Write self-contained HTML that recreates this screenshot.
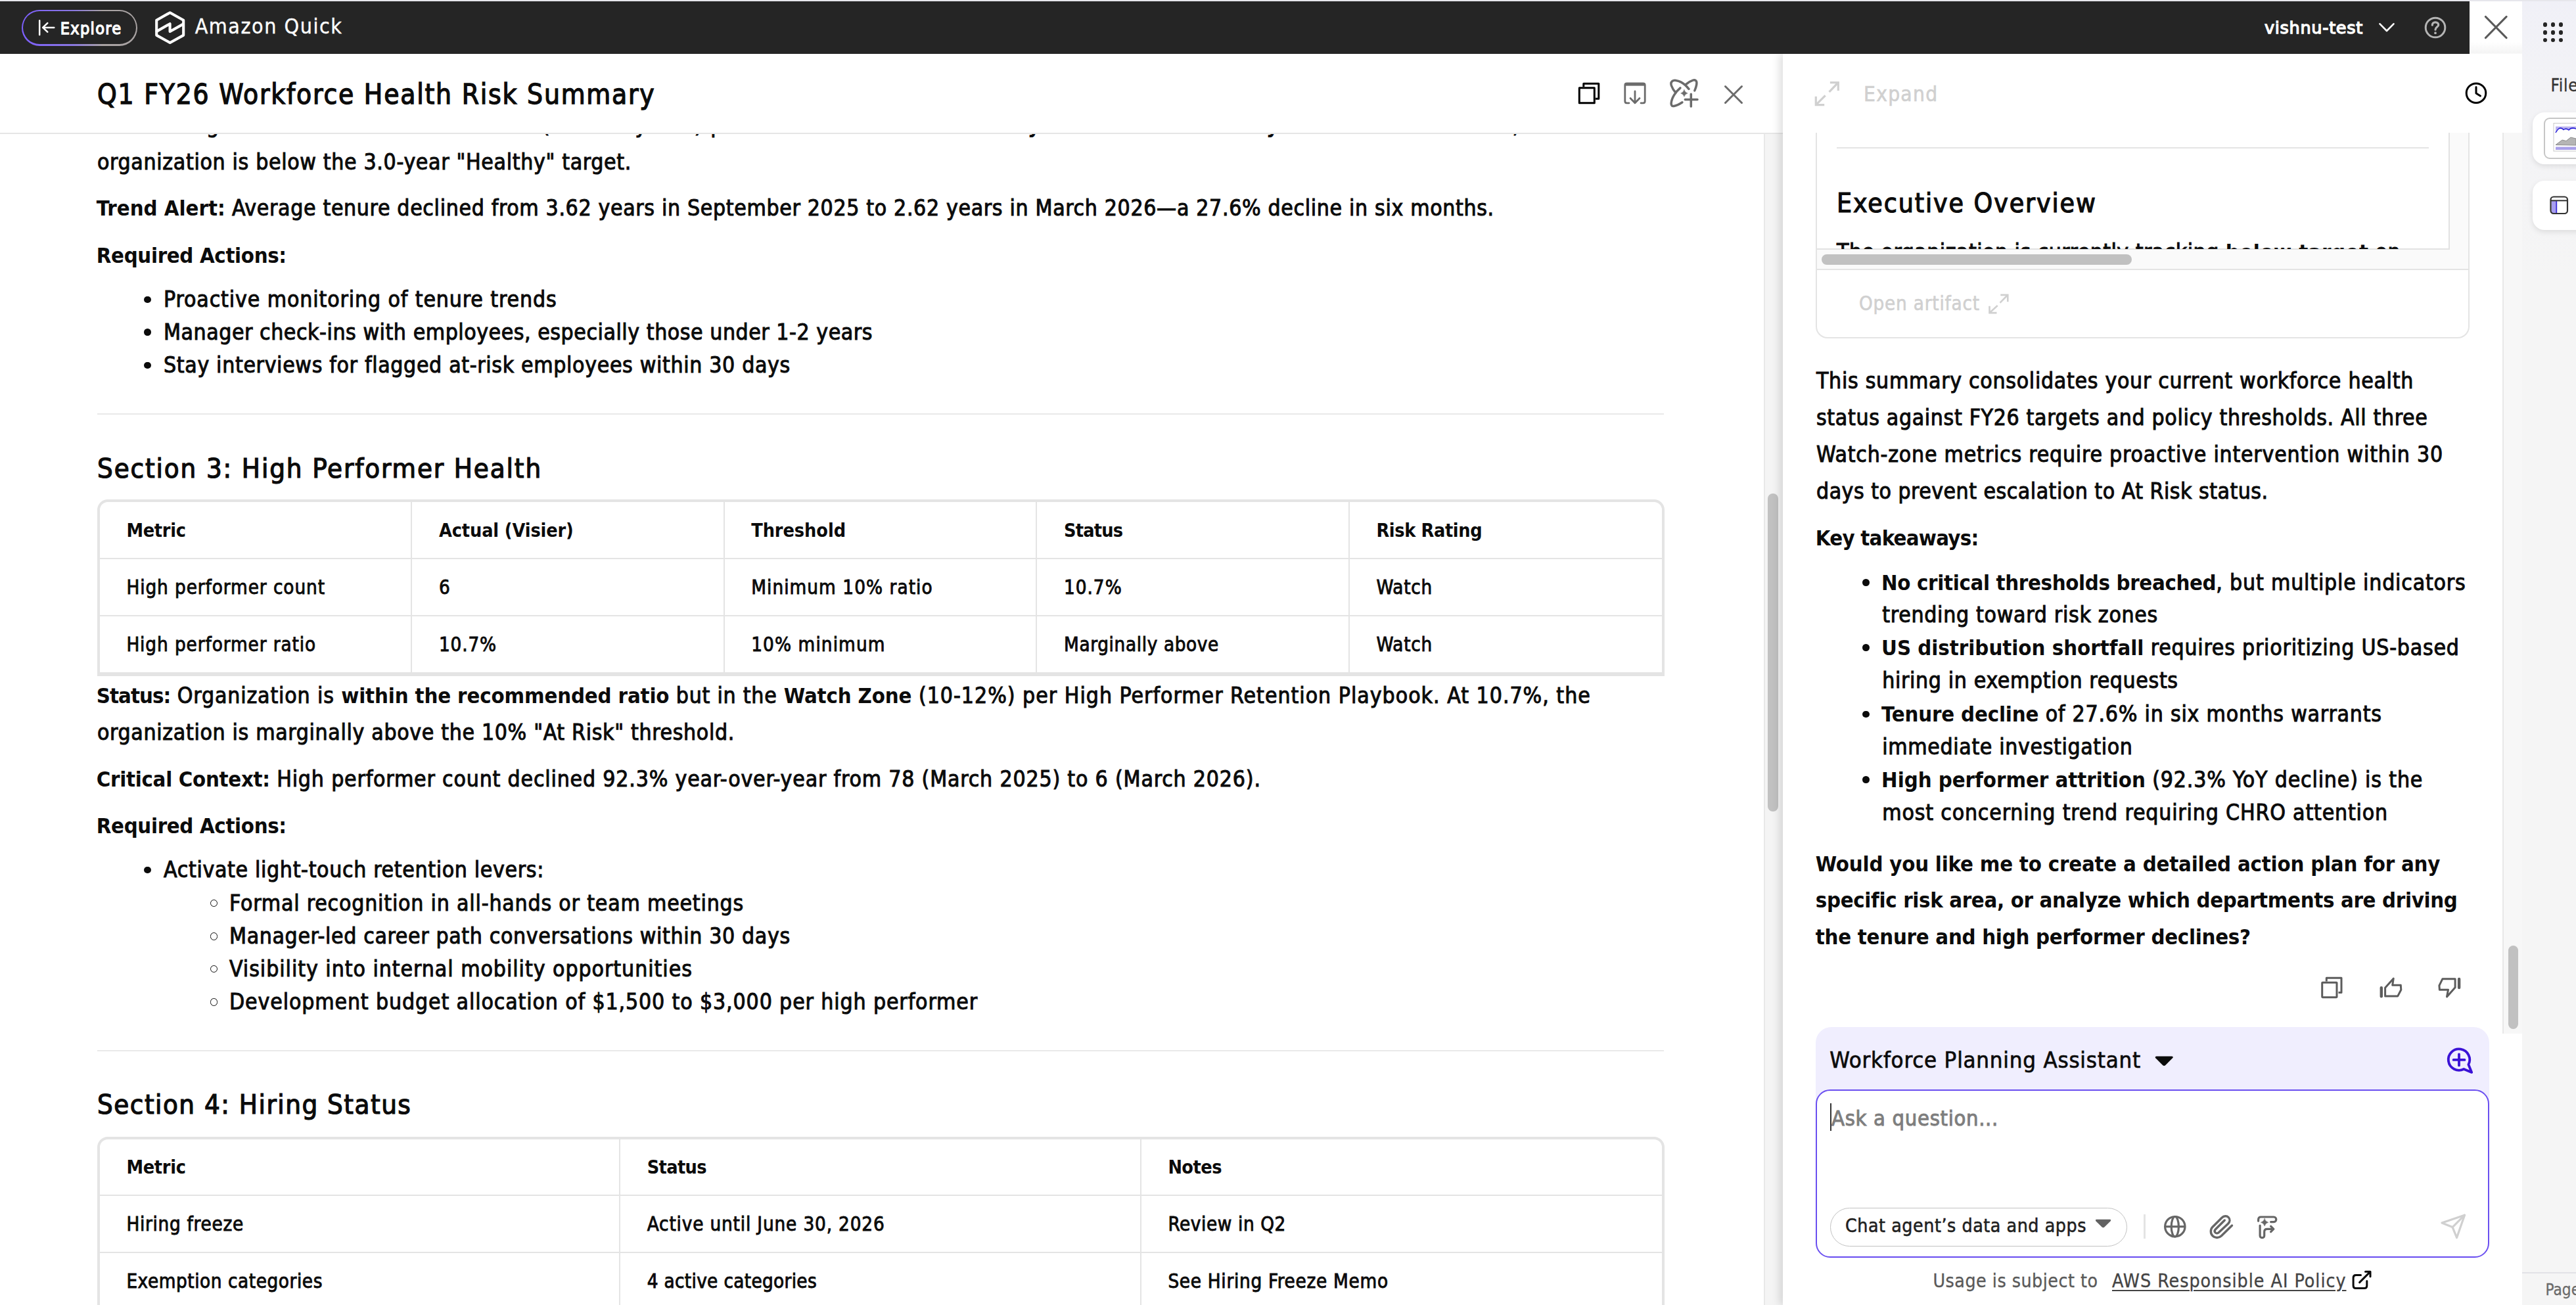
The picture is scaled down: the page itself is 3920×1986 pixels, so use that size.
<!DOCTYPE html>
<html lang="en"><head><meta charset="utf-8"><title>Q1 FY26 Workforce Health Risk Summary - Amazon Quick</title>
<style>
*{box-sizing:border-box;margin:0;padding:0}
html,body{width:3920px;height:1986px;overflow:hidden;background:#fff}
body{position:relative;font-family:"DejaVu Sans Condensed","Liberation Sans",sans-serif;color:#0b0b0b}
.t{position:absolute;white-space:nowrap;line-height:1;font-weight:400;-webkit-text-stroke:0.03em;display:block;text-decoration:none}
.t b{font-weight:700;font-size:0.975em;-webkit-text-stroke:0}
.sb{-webkit-text-stroke:0.05em}
.md{-webkit-text-stroke:0.02em}
.lt{-webkit-text-stroke:0.012em}
.w{font-family:"DejaVu Sans","Liberation Sans",sans-serif}
.abs{position:absolute}
svg{position:absolute;overflow:visible}
.hr{position:absolute;height:2px;background:#e9e9e9}
ul,li{list-style:none;display:block}
.dot{display:block;position:absolute;width:10.6px;height:10.6px;border-radius:50%;background:#0b0b0b}
.ring{display:block;position:absolute;width:11.6px;height:11.6px;border-radius:50%;border:1.7px solid #0b0b0b}
.tbl{position:absolute;border-collapse:separate;border-spacing:0;table-layout:fixed;border:4px solid #e4e4e4;border-bottom-width:6px;border-radius:16px 16px 0 0;background:#fff}
.tbl th,.tbl td{position:relative;padding:0;border-right:2px solid #e4e4e4;border-bottom:2px solid #e4e4e4;font-weight:400;text-align:left}
.tbl .lc{border-right:0}
.tbl .lr{border-bottom:0}
.tb{position:absolute;border:4px solid #e4e4e4;border-bottom-width:6px;border-radius:16px 16px 0 0;background:#fff}
.vl{position:absolute;width:2px;background:#e4e4e4}
.hl{position:absolute;height:2px;background:#e4e4e4}
.ul{text-decoration:underline;text-decoration-thickness:2px;text-underline-offset:4px}
</style></head><body>
<main>
<div class="t" style="left:146.8px;top:173.7px;font-size:33.50px;"><span style="letter-spacing:0.278px"><b>Status:</b> Organization is in the <b>Watch Zone</b> </span><span style="letter-spacing:1.507px">(2.0-3.0 years) per</span><span style="letter-spacing:-0.148px"> Tenure Rules. Mean of <b>2.62 </b></span><span style="letter-spacing:-0.601px"><b>years is below the 3.0-</b></span><span style="letter-spacing:0.218px"><b>year</b> mark across teams</span><span style="letter-spacing:0.586px">, so the</span></div>
<div class="t" style="left:148px;top:229.7px;font-size:33.50px;letter-spacing:0.663px;">organization is below the 3.0-year "Healthy" target.</div>
<div class="t" style="left:146.8px;top:300.2px;font-size:33.50px;"><span style="letter-spacing:-0.008px"><b>Trend Alert:</b></span><span style="letter-spacing:0.658px"> Average tenure declined from 3.62 years in September 2025 to 2.62 years in March 2026—a 27.6% decline in six months.</span></div>
<div class="t" style="left:146.8px;top:371.7px;font-size:33.50px;letter-spacing:-0.346px;"><b>Required Actions:</b></div>
<ul>
<li><span class="dot" style="left:219.4px;top:450.7px"></span><div class="t" style="left:249px;top:439.2px;font-size:33.50px;letter-spacing:0.883px;">Proactive monitoring of tenure trends</div></li>
<li><span class="dot" style="left:219.4px;top:500.4px"></span><div class="t" style="left:249px;top:488.9px;font-size:33.50px;letter-spacing:0.546px;">Manager check-ins with employees, especially those under 1-2 years</div></li>
<li><span class="dot" style="left:219.4px;top:550.9px"></span><div class="t" style="left:249px;top:539.4px;font-size:33.50px;letter-spacing:0.659px;">Stay interviews for flagged at-risk employees within 30 days</div></li>
</ul>
<div class="hr" style="left:148px;top:629px;width:2384px"></div>
<h2 class="t h2" style="left:148px;top:692.3px;font-size:41.57px;letter-spacing:1.891px;">Section 3: High Performer Health</h2>
<table class="tbl" aria-label="High performer health" style="left:148.2px;top:760px;width:2384.8px;height:268.8px"><colgroup><col style="width:474.8px"><col style="width:476px"><col style="width:475px"><col style="width:476px"><col style="width:475px"></colgroup><thead><tr style="height:86.5px"><th><div class="t" style="left:40.2px;top:28.9px;font-size:29.32px;letter-spacing:-0.294px;"><b>Metric</b></div></th><th><div class="t" style="left:41px;top:28.9px;font-size:29.32px;letter-spacing:-0.139px;"><b>Actual (Visier)</b></div></th><th><div class="t" style="left:40.2px;top:28.9px;font-size:29.32px;letter-spacing:-0.074px;"><b>Threshold</b></div></th><th><div class="t" style="left:41px;top:28.9px;font-size:29.32px;letter-spacing:-0.813px;"><b>Status</b></div></th><th class="lc"><div class="t" style="left:40.4px;top:28.9px;font-size:29.32px;letter-spacing:-0.366px;"><b>Risk Rating</b></div></th></tr></thead><tbody><tr style="height:87.5px"><td><div class="t" style="left:40.2px;top:29.7px;font-size:29.32px;letter-spacing:0.926px;">High performer count</div></td><td><div class="t" style="left:41px;top:29.7px;font-size:29.32px;letter-spacing:-0.381px;">6</div></td><td><div class="t" style="left:40.2px;top:29.7px;font-size:29.32px;letter-spacing:1.066px;">Minimum 10% ratio</div></td><td><div class="t" style="left:41px;top:29.7px;font-size:29.32px;letter-spacing:0.987px;">10.7%</div></td><td class="lc"><div class="t" style="left:40.4px;top:29.7px;font-size:29.32px;letter-spacing:0.716px;">Watch</div></td></tr><tr style="height:84.8px"><td class="lr"><div class="t" style="left:40.2px;top:29.2px;font-size:29.32px;letter-spacing:0.907px;">High performer ratio</div></td><td class="lr"><div class="t" style="left:41px;top:29.2px;font-size:29.32px;letter-spacing:0.847px;">10.7%</div></td><td class="lr"><div class="t" style="left:40.2px;top:29.2px;font-size:29.32px;letter-spacing:1.113px;">10% minimum</div></td><td class="lr"><div class="t" style="left:41px;top:29.2px;font-size:29.32px;letter-spacing:0.645px;">Marginally above</div></td><td class="lc lr"><div class="t" style="left:40.4px;top:29.2px;font-size:29.32px;letter-spacing:0.716px;">Watch</div></td></tr></tbody></table>
<div class="t" style="left:146.8px;top:1042.3px;font-size:33.50px;"><span style="letter-spacing:-0.964px"><b>Status:</b></span><span style="letter-spacing:0.853px"> Organization is </span><span style="letter-spacing:-0.151px"><b>within the recommended ratio</b></span><span style="letter-spacing:0.760px"> but in the </span><span style="letter-spacing:-0.153px"><b>Watch Zone</b></span><span style="letter-spacing:0.994px"> (10-12%) per High Performer Retention Playbook. At 10.7%, the</span></div>
<div class="t" style="left:148px;top:1097.7px;font-size:33.50px;letter-spacing:0.663px;">organization is marginally above the 10% "At Risk" threshold.</div>
<div class="t" style="left:146.8px;top:1169.4px;font-size:33.50px;"><span style="letter-spacing:-0.302px"><b>Critical Context:</b></span><span style="letter-spacing:0.818px"> High performer count declined 92.3% year-over-year from 78 (March 2025) to 6 (March 2026).</span></div>
<div class="t" style="left:146.8px;top:1240.1px;font-size:33.50px;letter-spacing:-0.346px;"><b>Required Actions:</b></div>
<ul><li><span class="dot" style="left:219.4px;top:1318.7px"></span>
<div class="t" style="left:249px;top:1307.2px;font-size:33.50px;letter-spacing:0.664px;">Activate light-touch retention levers:</div>
<ul>
<li><span class="ring" style="left:319.8px;top:1368.7px"></span><div class="t" style="left:349px;top:1357.7px;font-size:33.50px;letter-spacing:0.808px;">Formal recognition in all-hands or team meetings</div></li>
<li><span class="ring" style="left:319.8px;top:1419.0px"></span><div class="t" style="left:349px;top:1408.0px;font-size:33.50px;letter-spacing:0.641px;">Manager-led career path conversations within 30 days</div></li>
<li><span class="ring" style="left:319.8px;top:1468.5px"></span><div class="t" style="left:349px;top:1457.5px;font-size:33.50px;letter-spacing:0.956px;">Visibility into internal mobility opportunities</div></li>
<li><span class="ring" style="left:319.8px;top:1519.0px"></span><div class="t" style="left:349px;top:1508.0px;font-size:33.50px;letter-spacing:0.876px;">Development budget allocation of $1,500 to $3,000 per high performer</div></li>
</ul></li></ul>
<div class="hr" style="left:148px;top:1598px;width:2384px"></div>
<h2 class="t h2" style="left:148px;top:1660.2px;font-size:41.57px;letter-spacing:1.524px;">Section 4: Hiring Status</h2>
<table class="tbl" aria-label="Hiring status" style="left:148.2px;top:1729.6px;width:2384.8px;height:273.4px"><colgroup><col style="width:791.8px"><col style="width:793px"><col style="width:792px"></colgroup><thead><tr style="height:86.4px"><th><div class="t" style="left:40.2px;top:28.9px;font-size:29.32px;letter-spacing:-0.294px;"><b>Metric</b></div></th><th><div class="t" style="left:40.7px;top:28.9px;font-size:29.32px;letter-spacing:-0.630px;"><b>Status</b></div></th><th class="lc"><div class="t" style="left:40.4px;top:28.9px;font-size:29.32px;letter-spacing:-0.527px;"><b>Notes</b></div></th></tr></thead><tbody><tr style="height:87.2px"><td><div class="t" style="left:40.2px;top:29.5px;font-size:29.32px;letter-spacing:0.725px;">Hiring freeze</div></td><td><div class="t" style="left:40.7px;top:29.5px;font-size:29.32px;letter-spacing:0.847px;">Active until June 30, 2026</div></td><td class="lc"><div class="t" style="left:40.4px;top:29.5px;font-size:29.32px;letter-spacing:0.609px;">Review in Q2</div></td></tr><tr style="height:89.8px"><td class="lr"><div class="t" style="left:40.2px;top:29.2px;font-size:29.32px;letter-spacing:0.572px;">Exemption categories</div></td><td class="lr"><div class="t" style="left:40.7px;top:29.2px;font-size:29.32px;letter-spacing:0.337px;">4 active categories</div></td><td class="lc lr"><div class="t" style="left:40.4px;top:29.2px;font-size:29.32px;letter-spacing:0.713px;">See Hiring Freeze Memo</div></td></tr></tbody></table>
</main>
<div class="abs" style="left:2684px;top:204px;width:29px;height:1782px;background:#f4f4f4;border-left:2px solid #e8e8e8"></div>
<div class="abs" style="left:2690px;top:751px;width:16px;height:484px;border-radius:8px;background:#c1c1c1"></div><div class="abs" style="left:0;top:82px;width:2713px;height:122px;background:#fff;border-bottom:2px solid #e6e6e6"></div>
<h1 class="t h1" style="left:148px;top:123.0px;font-size:42.09px;letter-spacing:1.782px;">Q1 FY26 Workforce Health Risk Summary</h1>
<svg style="left:2396px;top:120px" width="44" height="44" viewBox="2396 120 44 44" fill="none" stroke="#000" stroke-width="3" stroke-linejoin="round"><path d="M2409.8 132V127.2H2432.8V150.2H2428"/><rect x="2403.3" y="133.7" width="23" height="23" /></svg>
<svg style="left:2466px;top:120px" width="44" height="44" viewBox="2466 120 44 44" fill="none" stroke="#6b6b6b" stroke-width="2.8" stroke-linecap="round" stroke-linejoin="round"><path d="M2479 156.8H2475.5Q2472.8 156.8 2472.8 154V129.5Q2472.8 127 2475.5 127H2500.5Q2503.2 127 2503.2 129.5V154Q2503.2 156.8 2500.5 156.8H2497"/><path d="M2473 128.3H2503" stroke-width="4.6" stroke-linecap="butt"/><path d="M2488 139V156.5M2481 149.5L2488 156.8L2495 149.5"/></svg>
<svg style="left:2538px;top:116px" width="52" height="52" viewBox="2538 116 52 52" fill="none" stroke="#6b6b6b" stroke-width="3.5" stroke-linecap="round" stroke-linejoin="round"><path d="M2569.9 135.4C2566 130.5 2561 126.5 2557.9 124.9C2553 122.2 2547 121.5 2544.6 123.6C2542.4 125.5 2542.6 128 2543.5 130.5C2544.6 133.5 2546.2 137.2 2549.9 140.9"/><path d="M2556.9 133.9C2553 137 2549.5 141.5 2547.4 144.9C2545 149 2543.3 154 2543.1 157.6C2543.2 160.8 2544.8 161.8 2547 161.4C2550 161 2555 159 2559.9 155.8"/><path d="M2564.9 128.9C2567.5 126.5 2572 123.4 2576.3 122.1C2579.6 121.3 2581.9 122.6 2581.9 125.8C2581.9 129.2 2580.5 134 2578.8 137.9"/><path d="M2562.9 136.7Q2564 140.8 2568.1 141.9Q2564 143 2562.9 147.1Q2561.8 143 2557.7 141.9Q2561.8 140.8 2562.9 136.7Z" fill="#6b6b6b" stroke-width="0.6"/><path d="M2564.3 151.6H2583M2573.3 143.2V162"/></svg>
<svg style="left:2620px;top:126px" width="36" height="36" viewBox="2620 126 36 36" fill="none" stroke="#6b6b6b" stroke-width="3" stroke-linecap="round"><path d="M2625.5 131.5L2650.5 156.5M2650.5 131.5L2625.5 156.5"/></svg><aside class="abs" style="left:2713px;top:82px;width:1125px;height:1904px;background:#fff;box-shadow:-5px 0 12px rgba(0,0,0,0.13)"></aside>
<div class="abs" style="left:3758px;top:2px;width:80px;height:80px;background:linear-gradient(180deg,#fff 0,#fff 62px,#f4f4f4 79px,#fdfdfd 80px)"></div>
<div class="abs" style="left:3808px;top:202px;width:30px;height:1371px;background:#f7f7f7;border-left:2px solid #e8e8e8"></div>
<div class="abs" style="left:3817px;top:1439px;width:15px;height:127px;border-radius:8px;background:#c1c1c1"></div>
<div class="abs" style="left:2763px;top:150px;width:995px;height:365px;border:2px solid #e4e4e4;border-radius:18px;background:#fff"></div>
<div class="abs" style="left:2765px;top:150px;width:963px;height:230px;border-right:2px solid #e2e2e2;border-bottom:2px solid #e2e2e2;background:#fff"></div>
<div class="abs" style="left:3728px;top:200px;width:28px;height:210px;background:#fafafa"></div>
<div class="abs" style="left:2765px;top:380px;width:991px;height:30px;background:#fafafa"></div>
<div class="abs" style="left:2765px;top:409px;width:991px;height:2px;background:#e4e4e4"></div>
<div class="abs" style="left:2771.5px;top:387px;width:472px;height:15.5px;border-radius:8px;background:#c1c1c1"></div>
<div class="hr" style="left:2795px;top:224px;width:901px;background:#e4e4e4"></div>
<h2 class="t h2" style="left:2795px;top:288.5px;font-size:40.62px;letter-spacing:1.914px;">Executive Overview</h2>
<div class="abs" style="left:2790px;top:360px;width:900px;height:19px;overflow:hidden"><div class="t" style="left:5px;top:6.7px;font-size:33.50px;letter-spacing:0.473px;">The organization is currently tracking <b>below target</b> on</div></div>
<div class="t md" style="left:2828.9px;top:448.0px;font-size:29.32px;color:#d0d0d0;letter-spacing:0.796px;">Open artifact</div>
<svg style="left:3024px;top:444px" width="36" height="36" viewBox="3024 444 36 36" fill="none" stroke="#d0d0d0" stroke-width="2.6" stroke-linecap="square" stroke-linejoin="miter"><path d="M3045.6 448.9H3055.3V458M3054.6 449.6L3044.4 459.8M3027.5 467V476.1H3037.2M3028.2 475.4L3038.8 465.8"/></svg>
<div class="abs" style="left:2713px;top:82px;width:1125px;height:120px;background:#fff"></div>
<svg style="left:2758px;top:120px" width="46" height="46" viewBox="2758 120 46 46" fill="none" stroke="#d0d0d0" stroke-width="3.2" stroke-linecap="square" stroke-linejoin="miter"><path d="M2786.5 125.6H2797.3V136.5M2796.5 126.4L2784.6 138.8M2763.3 148.3V159.6H2774.6M2764.1 158.8L2776.5 146.5"/></svg>
<div class="t md" style="left:2836px;top:127.9px;font-size:31.41px;color:#d0d0d0;letter-spacing:1.285px;">Expand</div>
<svg style="left:3748px;top:122px" width="40" height="40" viewBox="3748 122 40 40" fill="none" stroke="#000" stroke-width="3" stroke-linecap="round" stroke-linejoin="round"><circle cx="3768" cy="141.7" r="14.8"/><path d="M3768 132.5V142L3774.5 146"/></svg>
<div class="t" style="left:2764px;top:562.7px;font-size:33.50px;letter-spacing:0.703px;">This summary consolidates your current workforce health</div>
<div class="t" style="left:2764px;top:618.5px;font-size:33.50px;letter-spacing:0.655px;">status against FY26 targets and policy thresholds. All three</div>
<div class="t" style="left:2764px;top:675.3px;font-size:33.50px;letter-spacing:0.787px;">Watch-zone metrics require proactive intervention within 30</div>
<div class="t" style="left:2764px;top:730.7px;font-size:33.50px;letter-spacing:0.489px;">days to prevent escalation to At Risk status.</div>
<div class="t" style="left:2762.8px;top:801.7px;font-size:33.50px;letter-spacing:-0.752px;"><b>Key takeaways:</b></div>
<ul>
<li><span class="dot" style="left:2834.4px;top:881.0px"></span>
<div class="t" style="left:2863.1px;top:869.5px;font-size:33.50px;"><span style="letter-spacing:-0.347px"><b>No critical thresholds breached</b></span><span style="letter-spacing:0.820px">, but multiple indicators</span></div>
<div class="t" style="left:2864.3px;top:919.3px;font-size:33.50px;letter-spacing:0.704px;">trending toward risk zones</div>
</li><li><span class="dot" style="left:2834.4px;top:980.2px"></span>
<div class="t" style="left:2863.1px;top:968.7px;font-size:33.50px;"><span style="letter-spacing:-0.016px"><b>US distribution shortfall</b></span><span style="letter-spacing:0.780px"> requires prioritizing US-based</span></div>
<div class="t" style="left:2864.3px;top:1019.3px;font-size:33.50px;letter-spacing:0.642px;">hiring in exemption requests</div>
</li><li><span class="dot" style="left:2834.4px;top:1081.5px"></span>
<div class="t" style="left:2863.1px;top:1070.0px;font-size:33.50px;"><span style="letter-spacing:-0.163px"><b>Tenure decline</b></span><span style="letter-spacing:0.782px"> of 27.6% in six months warrants</span></div>
<div class="t" style="left:2864.3px;top:1119.7px;font-size:33.50px;letter-spacing:0.637px;">immediate investigation</div>
</li><li><span class="dot" style="left:2834.4px;top:1181.4px"></span>
<div class="t" style="left:2863.1px;top:1169.9px;font-size:33.50px;"><span style="letter-spacing:-0.041px"><b>High performer attrition</b></span><span style="letter-spacing:0.826px"> (92.3% YoY decline) is the</span></div>
<div class="t" style="left:2864.3px;top:1219.7px;font-size:33.50px;letter-spacing:0.823px;">most concerning trend requiring CHRO attention</div>
</li></ul>
<div class="t" style="left:2762.8px;top:1297.7px;font-size:33.50px;letter-spacing:-0.210px;"><b>Would you like me to create a detailed action plan for any</b></div>
<div class="t" style="left:2762.8px;top:1353.2px;font-size:33.50px;letter-spacing:-0.340px;"><b>specific risk area, or analyze which departments are driving</b></div>
<div class="t" style="left:2762.8px;top:1408.7px;font-size:33.50px;letter-spacing:-0.277px;"><b>the tenure and high performer declines?</b></div>
<svg style="left:3526px;top:1482px" width="44" height="44" viewBox="3526 1482 44 44" fill="none" stroke="#5c5c5c" stroke-width="3" stroke-linejoin="round"><path d="M3540.3 1493.5V1488.2H3563V1510.4H3558.5"/><rect x="3533.7" y="1495.2" width="22.3" height="22.5" rx="0.6"/></svg>
<svg style="left:3616px;top:1482px" width="44" height="44" viewBox="3616 1482 44 44" fill="none" stroke="#5c5c5c" stroke-width="3" stroke-linejoin="round" stroke-linecap="round"><path d="M3623.8 1503.2V1516.2" stroke-width="4.4"/><path d="M3629.6 1515.9V1503.3L3642.2 1489.2L3640.7 1499.3H3653.3L3653.8 1506.3L3648.8 1515.9Z"/></svg>
<svg style="left:3706px;top:1482px" width="44" height="44" viewBox="3706 1482 44 44" fill="none" stroke="#5c5c5c" stroke-width="3" stroke-linejoin="round" stroke-linecap="round"><path d="M3742.1 1490V1503" stroke-width="4.4"/><path d="M3736.1 1489.7V1502.8L3723.5 1516.9L3725.5 1506.3H3712.4L3711.9 1499.8L3716.9 1489.7Z"/></svg>
<div class="abs" style="left:2763px;top:1563px;width:1025px;height:352px;border-radius:24px;background:#f0eefe"></div>
<div class="t md" style="left:2784.3px;top:1595.6px;font-size:34.55px;letter-spacing:0.779px;">Workforce Planning Assistant</div>
<svg style="left:3276px;top:1602px" width="36" height="24" viewBox="3276 1602 36 24"><path d="M3281.5 1607.5H3305Q3308 1607.8 3306 1610.3L3295.3 1621Q3293.2 1622.8 3291 1621L3280.3 1610.3Q3278.6 1607.8 3281.5 1607.5Z" fill="#0b0b0b"/></svg>
<svg style="left:3718px;top:1590px" width="48" height="48" viewBox="3718 1590 48 48" fill="none" stroke="#3b12d6" stroke-width="3.8" stroke-linecap="round" stroke-linejoin="round"><path d="M3756.35 1620L3761.2 1631.9L3749.3 1627A16.2 16.2 0 1 1 3756.35 1620Z"/><path d="M3733.6 1612.9H3750.5M3742 1604.3V1621.4"/></svg>
<div class="abs" style="left:2763px;top:1658px;width:1025px;height:256px;border:2px solid #6a4ff0;border-radius:22px;background:#fff"></div>
<div class="abs" style="left:2785px;top:1679px;width:2px;height:42px;background:#333"></div>
<div class="t" style="left:2787px;top:1685.9px;font-size:32.46px;color:#7e7e7e;letter-spacing:0.677px;">Ask a question...</div>
<div class="abs" style="left:2785px;top:1837.5px;width:452px;height:59px;border:1.7px solid #c2c2c2;border-radius:30px"></div>
<div class="t md" style="left:2808px;top:1851.9px;font-size:28.27px;color:#1f1f1f;letter-spacing:0.547px;">Chat agent’s data and apps</div>
<svg style="left:3184px;top:1850px" width="34" height="24" viewBox="3184 1852 34 24"><path d="M3190.5 1857.8H3210.5Q3213.5 1858 3211.5 1860.4L3202.3 1869.6Q3200.5 1871 3198.7 1869.6L3189.5 1860.4Q3187.8 1858 3190.5 1857.8Z" fill="#626262"/></svg>
<div class="abs" style="left:3262.2px;top:1848px;width:2.8px;height:37px;background:#e4e4e4"></div>
<svg style="left:3290px;top:1846px" width="40" height="40" viewBox="3290 1846 40 40" fill="none" stroke="#666" stroke-width="3.2"><circle cx="3309.8" cy="1866.7" r="15.2"/><path d="M3294.6 1866.7H3325"/><ellipse cx="3309.8" cy="1866.7" rx="5.6" ry="15.2"/></svg>
<svg style="left:3356px;top:1844px" width="46" height="46" viewBox="3356 1844 46 46" fill="none" stroke="#666" stroke-width="3.4" stroke-linecap="round" stroke-linejoin="round"><path d="M3396.5 1865L3380.4 1880.7C3376.5 1884.3 3371 1884.5 3367.3 1881C3363.4 1877.2 3363.3 1871.2 3367 1867.2L3381 1853.2C3384.3 1850 3388.6 1850 3391.2 1852.6C3393.8 1855.3 3393.6 1859.2 3390.6 1862.2L3376.5 1875.5C3374.7 1877.2 3372.5 1877.2 3371.2 1875.9C3369.8 1874.5 3369.9 1872.4 3371.5 1870.7L3385.3 1857"/></svg>
<svg style="left:3428px;top:1844px" width="46" height="46" viewBox="3428 1844 46 46" fill="none" stroke="#666" stroke-width="3.2" stroke-linecap="round" stroke-linejoin="round"><path d="M3436.6 1858.2V1856Q3436.6 1852 3440.6 1852H3460C3465 1852 3465 1859.6 3460 1859.6H3455.6"/><path d="M3439.1 1865V1880.4C3439.1 1884.8 3445.7 1884.8 3445.7 1880.4V1874.6Q3445.7 1870.4 3450 1870.4H3459"/><path d="M3455.6 1866.2L3459.8 1870.4L3455.6 1874.6"/><path d="M3446.1 1854.4Q3447.2 1859.1 3451.9 1860.2Q3447.2 1861.3 3446.1 1866Q3445 1861.3 3440.3 1860.2Q3445 1859.1 3446.1 1854.4Z" fill="#666" stroke-width="0.5"/></svg>
<svg style="left:3710px;top:1844px" width="46" height="46" viewBox="3710 1844 46 46" fill="none" stroke="#d0d0d0" stroke-width="3.2" stroke-linecap="round" stroke-linejoin="round"><path d="M3750.5 1849.2L3715.9 1861.1L3732.1 1867.6L3738.6 1883.6Z"/><path d="M3750.5 1849.2L3732.1 1867.6"/></svg>
<div class="t lt" style="left:2941.5px;top:1935.6px;font-size:28.27px;color:#5a5a5a;letter-spacing:0.500px;">Usage is subject to</div>
<a class="t ul lt a" style="left:3214px;top:1935.6px;font-size:28.27px;color:#444;letter-spacing:0.996px;">AWS Responsible AI Policy</a>
<svg style="left:3574px;top:1929px" width="38" height="38" viewBox="3574 1929 38 38" fill="none" stroke="#0b0b0b" stroke-width="3" stroke-linecap="round" stroke-linejoin="round"><path d="M3592.5 1940.4H3585Q3581.1 1940.4 3581.1 1944.4V1956.4Q3581.1 1960.4 3585 1960.4H3597.8Q3601.8 1960.4 3601.8 1956.4V1949.5"/><path d="M3599.5 1935.2H3607V1942.7M3606.6 1935.6L3590.6 1951.6"/></svg><div class="abs" style="left:0;top:0;width:3920px;height:2px;background:#e6e6ec"></div>
<header class="abs" style="left:0;top:2px;width:3758px;height:80px;background:#252525"></header>
<div class="abs" style="left:33px;top:15px;width:176px;height:54.5px;border-radius:28px;background:linear-gradient(90deg,#7d5fff 0%,#8a78e0 45%,#a9a3a3 70%,#a9a3a3 100%)"><div class="abs" style="left:2.2px;top:2.2px;right:2.2px;bottom:2.2px;border-radius:26px;background:#252525"></div></div>
<svg style="left:55px;top:26px" width="32" height="32" viewBox="55 26 32 32" fill="none" stroke="#fff" stroke-width="2.5" stroke-linecap="round" stroke-linejoin="round"><path d="M60.2 31.2V53M82.3 41.9H65.2M72.3 35.1L65.2 41.9L72.3 48.7"/></svg>
<div class="t sb" style="left:91.7px;top:30.7px;font-size:25.13px;color:#fff;letter-spacing:1.305px;">Explore</div>
<svg style="left:230px;top:12px" width="60" height="60" viewBox="230 12 60 60" fill="none" stroke="#fff" stroke-width="4.1" stroke-linejoin="round" stroke-linecap="round"><path d="M258.7 19.2L279.2 30.8V53.6L258.7 65L238.2 53.6V30.8Z"/><path d="M238.6 47.6L258.6 36.2V48L278.8 36.6"/></svg>
<div class="t lt" style="left:296.7px;top:25.0px;font-size:31.93px;color:#fff;letter-spacing:1.534px;">Amazon Quick</div>
<div class="t w sb" style="left:3446px;top:30.4px;font-size:25.55px;color:#fff;letter-spacing:0.692px;">vishnu-test</div>
<svg style="left:3615px;top:30px" width="34" height="24" viewBox="3615 30 34 24" fill="none" stroke="#fff" stroke-width="2.6" stroke-linecap="round" stroke-linejoin="round"><path d="M3621.5 36.3L3632 47L3642.5 36.3"/></svg>
<svg style="left:3686px;top:22px" width="40" height="40" viewBox="3686 22 40 40" fill="none" stroke="#b4b4b4" stroke-width="3" stroke-linecap="round"><circle cx="3706" cy="42" r="14.8"/><path d="M3701.3 38.2C3701.3 35.4 3703.3 33.8 3706 33.8C3708.8 33.8 3710.7 35.5 3710.7 37.9C3710.7 41.2 3706 41 3706 45.2" stroke-width="3.2"/><circle cx="3706" cy="50.2" r="1.2" fill="#b4b4b4" stroke-width="1.4"/></svg>
<svg style="left:3776px;top:20px" width="44" height="44" viewBox="3776 20 44 44" fill="none" stroke="#5a5a5a" stroke-width="3.2" stroke-linecap="round"><path d="M3782.5 25.5L3814 57.5M3814 25.5L3782.5 57.5"/></svg><nav class="abs" style="left:3838px;top:2px;width:82px;height:1984px;background:linear-gradient(180deg,#f0f0f7 0px,#f3f3f6 140px,#f5f5f5 420px,#f5f5f5 100%)"></nav>
<div class="abs" style="left:3869.7px;top:34.1px;width:6.6px;height:6.6px;border-radius:50%;background:#252525"></div>
<div class="abs" style="left:3869.7px;top:46px;width:6.6px;height:6.6px;border-radius:50%;background:#252525"></div>
<div class="abs" style="left:3869.7px;top:57.9px;width:6.6px;height:6.6px;border-radius:50%;background:#252525"></div>
<div class="abs" style="left:3881.7px;top:34.1px;width:6.6px;height:6.6px;border-radius:50%;background:#252525"></div>
<div class="abs" style="left:3881.7px;top:46px;width:6.6px;height:6.6px;border-radius:50%;background:#252525"></div>
<div class="abs" style="left:3881.7px;top:57.9px;width:6.6px;height:6.6px;border-radius:50%;background:#252525"></div>
<div class="abs" style="left:3893.7px;top:34.1px;width:6.6px;height:6.6px;border-radius:50%;background:#252525"></div>
<div class="abs" style="left:3893.7px;top:46px;width:6.6px;height:6.6px;border-radius:50%;background:#252525"></div>
<div class="abs" style="left:3893.7px;top:57.9px;width:6.6px;height:6.6px;border-radius:50%;background:#252525"></div>
<div class="t lt" style="left:3881.4px;top:117.4px;font-size:26.17px;color:#333;letter-spacing:0.700px;">File</div>
<div class="abs" style="left:3854px;top:171px;width:120px;height:79px;border-radius:18px;background:#fff;box-shadow:0 3px 8px rgba(0,0,0,0.10)"></div>
<div class="abs" style="left:3870.5px;top:179px;width:80px;height:63px;border-radius:9px;border:2px solid #c6c6c6;background:#fff"></div>
<svg style="left:3885px;top:186px" width="35" height="46" viewBox="3885 186 35 46"><rect x="3886" y="187.5" width="40" height="42.5" fill="#fff" stroke="#c8c8c8" stroke-width="1"/><rect x="3889" y="192.5" width="40" height="10" fill="#b9b1ee"/><path d="M3889 202L3893 196.5Q3897 193 3901 197.5Q3905 194.5 3909 198Q3913 193 3920 196" fill="none" stroke="#2a22d8" stroke-width="1.6"/><path d="M3889 203L3893 197.5Q3897 194 3901 198.5Q3905 195.5 3909 199Q3913 194 3920 197V206H3889Z" fill="#fff"/><path d="M3889 220.5L3899 213L3905 214.5L3912 209L3920 211V221Z" fill="#b5b5b5" stroke="#8a8a8a" stroke-width="1"/><rect x="3889" y="223.5" width="40" height="4.5" fill="#a9a0ea"/></svg>
<div class="abs" style="left:3854px;top:274.5px;width:120px;height:75px;border-radius:18px;background:#fff;box-shadow:0 3px 8px rgba(0,0,0,0.10)"></div>
<svg style="left:3878px;top:296px" width="34" height="34" viewBox="3878 296 34 34" fill="none"><rect x="3882.5" y="305" width="7.5" height="19" fill="#a79df0"/><path d="M3890.3 305V324.5" stroke="#3a2bd6" stroke-width="1.8"/><rect x="3881.5" y="299.5" width="25.5" height="25.5" rx="4.5" stroke="#333" stroke-width="2.2"/><path d="M3881.5 305.3H3907" stroke="#333" stroke-width="2"/></svg>
<div class="abs" style="left:3838px;top:1936px;width:82px;height:2px;background:#e2e2e6"></div>
<div class="t lt" style="left:3873.5px;top:1951.3px;font-size:24.08px;color:#6a6a6a;letter-spacing:0.050px;">Page</div>
</body></html>
